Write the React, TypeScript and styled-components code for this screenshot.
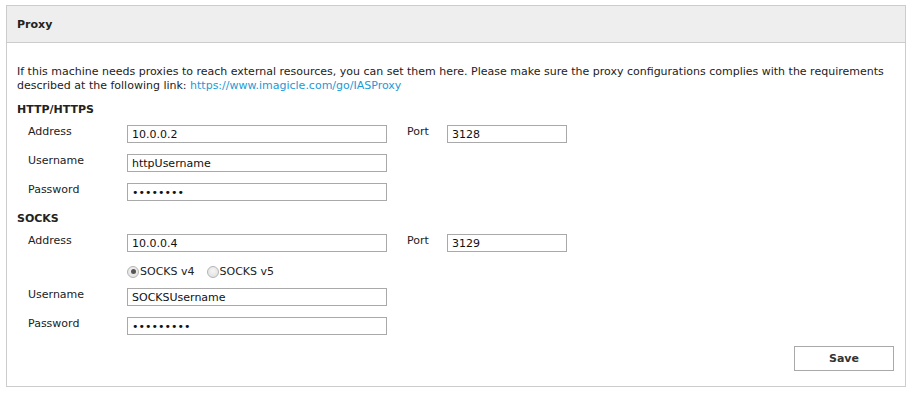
import React from 'react';
import styled, { createGlobalStyle } from 'styled-components';

const GlobalStyle = createGlobalStyle`
    body {
        margin: 0;
        background: #ffffff;
        font-family: 'DejaVu Sans', Verdana, sans-serif;
        font-size: 11px;
        color: #222222;
    }
`

const Panel = styled.div`
    margin: 5px 0 0 6px;
    width: 900px;
    box-sizing: border-box;
    border: 1px solid #cccccc;
`

const Header = styled.div`
    height: 37px;
    box-sizing: border-box;
    background: #eeeeee;
    border-bottom: 1px solid #cccccc;
    padding: 0 10px;
    display: flex;
    align-items: center;
    font-weight: bold;
    font-size: 11px;
`

const Body = styled.div`
    padding: 22px 10px 15px 10px;
    display: flex;
    flex-direction: column;
`

const Description = styled.p`
    margin: 0 0 11px 0;
    line-height: 13.5px;
`

const Link = styled.a`
    color: #1b9ad6;
    text-decoration: none;
`

const SectionTitle = styled.div`
    font-weight: bold;
    line-height: 13px;
    margin-bottom: 9px;
`

const Rows = styled.div`
    display: flex;
    flex-direction: column;
    gap: 11px;
    padding-left: 11px;
    margin-bottom: 11px;
`

const Row = styled.div<{ $short?: boolean }>`
    display: flex;
    align-items: flex-start;
    height: ${p => (p.$short ? '14px' : '18px')};
`

const Label = styled.label<{ $width: number }>`
    width: ${p => p.$width}px;
    flex-shrink: 0;
    line-height: 13px;
`

const TextInput = styled.input<{ $width: number }>`
    width: ${p => p.$width}px;
    height: 18px;
    box-sizing: border-box;
    border: 1px solid #a9a9a9;
    padding: 0 4px;
    margin: 0;
    font-family: 'DejaVu Sans', Verdana, sans-serif;
    font-size: 11px;
    color: #111111;
    background: #ffffff;
    outline: none;
`

const Spacer = styled.div`
    width: 20px;
    flex-shrink: 0;
`

const RadioGroup = styled.div`
    display: flex;
    align-items: center;
    margin: 2px 0 0 99px;
    gap: 12px;
    line-height: 13px;
`

const RadioOption = styled.label`
    display: flex;
    align-items: center;
    gap: 1px;
    color: #222222;
`

const Radio = styled.input`
    appearance: none;
    margin: 0;
    width: 12px;
    height: 12px;
    border-radius: 50%;
    border: 1px solid #b4b4b4;
    background: radial-gradient(circle at 50% 40%, #f6f6f6 0%, #dcdcdc 100%);
    box-sizing: border-box;
    position: relative;

    &:checked::after {
        content: '';
        position: absolute;
        left: 2.5px;
        top: 2.5px;
        width: 5px;
        height: 5px;
        border-radius: 50%;
        background: #555555;
    }
`

const Footer = styled.div`
    display: flex;
    justify-content: flex-end;
`

const SaveButton = styled.button`
    width: 100px;
    height: 25px;
    box-sizing: border-box;
    border: 1px solid #a9a9a9;
    background: #ffffff;
    font-family: 'DejaVu Sans', Verdana, sans-serif;
    font-size: 11px;
    font-weight: bold;
    color: #333333;
    margin-right: 1px;
`

type FieldProps = { label: string; value: string; type?: string; port?: string }

const Field = ({ label, value, type = 'text', port }: FieldProps) => (
    <Row>
        <Label $width={99}>{label}</Label>
        <TextInput $width={260} type={type} defaultValue={value} readOnly />
        {port !== undefined && (
            <>
                <Spacer />
                <Label $width={40}>Port</Label>
                <TextInput $width={120} defaultValue={port} readOnly />
            </>
        )}
    </Row>
)

export default function App() {
    return (
        <>
            <GlobalStyle />
            <Panel>
                <Header>Proxy</Header>
                <Body>
                    <Description>
                        If this machine needs proxies to reach external resources, you can set them here. Please make sure the proxy configurations complies with the requirements described at the following link: <Link href="#">https://www.imagicle.com/go/IASProxy</Link>
                    </Description>

                    <SectionTitle>HTTP/HTTPS</SectionTitle>
                    <Rows>
                        <Field label="Address" value="10.0.0.2" port="3128" />
                        <Field label="Username" value="httpUsername" />
                        <Field label="Password" value="abcdefgh" type="password" />
                    </Rows>

                    <SectionTitle>SOCKS</SectionTitle>
                    <Rows>
                        <Field label="Address" value="10.0.0.4" port="3129" />
                        <Row $short>
                            <RadioGroup>
                                <RadioOption><Radio type="radio" name="socks" defaultChecked />SOCKS v4</RadioOption>
                                <RadioOption><Radio type="radio" name="socks" />SOCKS v5</RadioOption>
                            </RadioGroup>
                        </Row>
                        <Field label="Username" value="SOCKSUsername" />
                        <Field label="Password" value="abcdefghi" type="password" />
                    </Rows>

                    <Footer>
                        <SaveButton>Save</SaveButton>
                    </Footer>
                </Body>
            </Panel>
        </>
    );
}
